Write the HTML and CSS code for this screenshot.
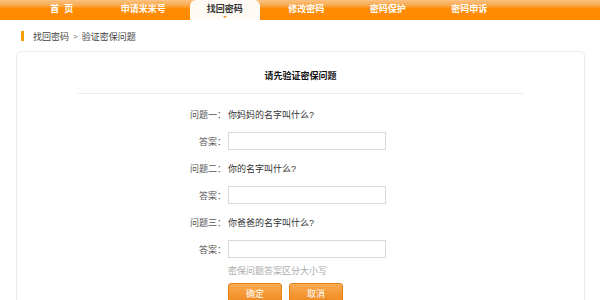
FILE: index.html
```html
<!DOCTYPE html>
<html lang="zh-CN">
<head>
    <meta charset="UTF-8">
    <meta name="viewport" content="width=device-width, initial-scale=1.0">
    <title>找回密码 - 验证密保问题</title>
    <link rel="stylesheet" href="styles.css">
</head>
<body>
    <div class="nav">
        <div class="nav-item"><a href="#">首&nbsp;&nbsp;页</a></div>
        <div class="nav-item"><a href="#">申请米米号</a></div>
        <div class="nav-item active"><a href="#">找回密码</a></div>
        <div class="nav-item"><a href="#">修改密码</a></div>
        <div class="nav-item"><a href="#">密码保护</a></div>
        <div class="nav-item"><a href="#">密码申诉</a></div>
    </div>

    <div class="crumb">
        <span class="crumb-mark"></span>
        <span>找回密码</span>
        <span class="crumb-sep">&gt;</span>
        <span>验证密保问题</span>
    </div>

    <div class="card">
        <h2 class="card-title">请先验证密保问题</h2>
        <div class="card-line"></div>
        <form class="qa-form" id="qaForm">
            <div class="row">
                <label class="row-label">问题一：</label>
                <span class="question">你妈妈的名字叫什么?</span>
            </div>
            <div class="row">
                <label class="row-label" for="answer1">答案：</label>
                <input class="answer" id="answer1" type="text">
            </div>
            <div class="row">
                <label class="row-label">问题二：</label>
                <span class="question">你的名字叫什么?</span>
            </div>
            <div class="row">
                <label class="row-label" for="answer2">答案：</label>
                <input class="answer" id="answer2" type="text">
            </div>
            <div class="row">
                <label class="row-label">问题三：</label>
                <span class="question">你爸爸的名字叫什么?</span>
            </div>
            <div class="row">
                <label class="row-label" for="answer3">答案：</label>
                <input class="answer" id="answer3" type="text">
            </div>
            <div class="row hint-row">
                <span class="row-label"></span>
                <span class="hint">密保问题答案区分大小写</span>
            </div>
            <div class="row button-row">
                <span class="row-label"></span>
                <button class="btn" type="submit">确定</button>
                <button class="btn" type="button">取消</button>
            </div>
        </form>
    </div>
</body>
</html>
```

FILE: styles.css
```css
body {
    margin: 0;
    font-family: "Liberation Sans", "Noto Sans CJK SC", sans-serif;
    font-size: 9px;
    color: #333;
    background-color: #ffffff;
}

/* top navigation */
.nav {
    display: flex;
    height: 20px;
    padding-left: 21px;
    background: linear-gradient(#fcc283 0%, #f9a544 30%, #ff8c05 42%, #ff8a00 100%);
}
.nav-item {
    width: 81.5px;
    display: flex;
    justify-content: center;
}
.nav-item a {
    display: block;
    width: 70px;
    line-height: 19px;
    text-align: center;
    color: #ffffff;
    font-weight: bold;
    text-decoration: none;
}
.nav-item.active a {
    position: relative;
    background-color: #fffaf3;
    color: #333;
    border-radius: 6px 6px 0 0;
    height: 20px;
}
.nav-item.active a::after {
    content: "";
    position: absolute;
    left: 33px;
    top: 16px;
    border-left: 2px solid transparent;
    border-right: 2px solid transparent;
    border-top: 2px solid #f08a1c;
}

/* breadcrumb */
.crumb {
    display: flex;
    align-items: center;
    gap: 4px;
    height: 12px;
    margin: 10px 0 9px 21px;
    color: #444;
}
.crumb-mark {
    width: 3px;
    height: 10px;
    background-color: #f5a000;
    margin-right: 5px;
}
.crumb-sep {
    font-size: 8px;
    color: #666;
}

/* card */
.card {
    margin: 0 15px 0 16px;
    border: 1px solid #ececec;
    border-radius: 5px;
    padding: 16px 0 40px;
}
.card-title {
    margin: 0;
    font-size: 9px;
    line-height: 16px;
    font-weight: bold;
    text-align: center;
    color: #111;
}
.card-line {
    height: 1px;
    margin: 9px 61px 11px 61px;
    background-color: #ececec;
}

.qa-form {
    display: flex;
    flex-direction: column;
    gap: 9px;
}
.row {
    display: flex;
    align-items: center;
    min-height: 18px;
}
.row-label {
    width: 209px;
    margin-right: 2px;
    text-align: right;
    color: #555;
}
.question {
    color: #333;
}
.answer {
    width: 158px;
    height: 18px;
    margin: 0;
    padding: 0 4px;
    box-sizing: border-box;
    border: 1px solid #d9d9d9;
    background-color: #ffffff;
    font-size: 9px;
}
.hint-row {
    min-height: 16px;
    margin-top: -5px;
}
.hint {
    color: #aaa;
}
.button-row {
    margin-top: -4px;
    gap: 7px;
}
.button-row .row-label {
    margin-right: -5px;
}
.btn {
    width: 54px;
    height: 20px;
    padding: 0;
    border: 1px solid #e48216;
    border-radius: 3px;
    background: linear-gradient(#fbab52, #ef8a1f);
    color: #ffffff;
    font-family: inherit;
    font-size: 9px;
    cursor: pointer;
}
.btn:hover {
    background: linear-gradient(#fcb866, #f39530);
}
```
